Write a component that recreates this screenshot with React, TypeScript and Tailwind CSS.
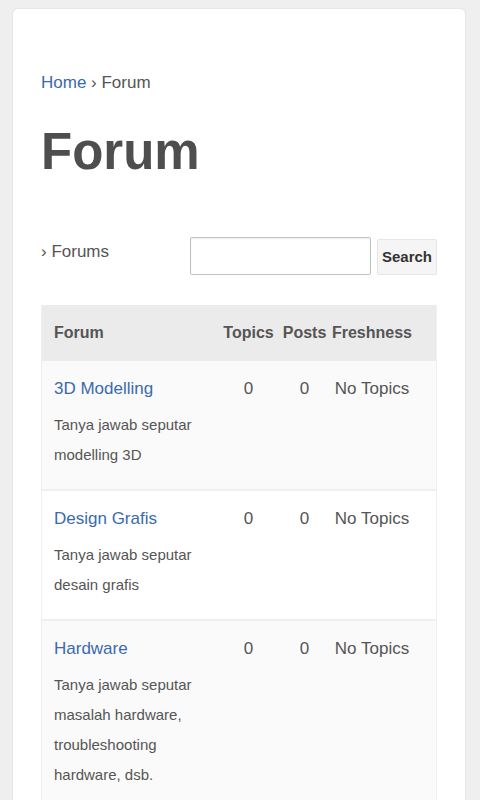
import React from "react";

const forums = [
  { name: "3D Modelling", desc: "Tanya jawab seputar modelling 3D" },
  { name: "Design Grafis", desc: "Tanya jawab seputar desain grafis" },
  {
    name: "Hardware",
    desc: "Tanya jawab seputar masalah hardware, troubleshooting hardware, dsb.",
  },
];

const cols = "grid grid-cols-[176px_61px_51px_84px_1fr]";

export default function App() {
  return (
    <div
      className="min-h-[800px] bg-[#efefef] pl-[13px] pr-[15px] pt-[9px]"
      style={{ fontFamily: '"Liberation Sans", Arial, sans-serif' }}
    >
      <div className="min-h-[791px] rounded-t-[5px] bg-white pl-[28px] pr-[28px] pt-[62px] shadow-[0_0_2px_rgba(0,0,0,0.12)]">
        {/* breadcrumb */}
        <div className="text-[17px] leading-[24px] text-[#555]">
          <a className="text-[#3a6aad]">Home</a> › Forum
        </div>

        <h1 className="mt-[28px] text-[51px] font-bold leading-[57px] text-[#4e4e4e]">
          Forum
        </h1>

        {/* sub-breadcrumb + search */}
        <div className="mt-[57px] flex items-start justify-between">
          <div className="mt-[3px] text-[17px] leading-[24px] text-[#555]">› Forums</div>
          <div className="flex items-end gap-[6px]">
            <input
              type="text"
              className="h-[38px] w-[181px] rounded-[2px] border border-[#c2c2c2] bg-white shadow-[inset_0_1px_2px_rgba(0,0,0,0.08)] outline-none"
            />
            <button className="h-[36px] w-[60px] rounded-[2px] border border-[#e6e6e6] bg-[#f5f5f5] text-[15px] font-bold text-[#333]">
              Search
            </button>
          </div>
        </div>

        {/* forum table */}
        <div className="mt-[30px] border-x border-[#f0f0f0]">
          <div className={`${cols} h-[56px] items-center bg-[#ebebeb] text-[16px] font-bold text-[#555]`}>
            <div className="pl-[12px]">Forum</div>
            <div className="text-center">Topics</div>
            <div className="text-center">Posts</div>
            <div className="text-center">Freshness</div>
            <div />
          </div>
          {forums.map((f, i) => (
            <div
              key={f.name}
              className={`${cols} ${i > 0 ? "border-t-2 border-[#efefef]" : ""} ${
                i % 2 === 0 ? "bg-[#fafafa]" : "bg-white"
              } pt-[16px] pb-[19px] text-[#555]`}
            >
              <div className="pl-[12px] pr-[4px]">
                <a className="block text-[17px] leading-[24px] text-[#3a6aad]">{f.name}</a>
                <p className="mt-[9px] text-[15px] leading-[30px]">{f.desc}</p>
              </div>
              <div className="text-center text-[17px] leading-[24px]">0</div>
              <div className="text-center text-[17px] leading-[24px]">0</div>
              <div className="text-center text-[17px] leading-[24px] whitespace-nowrap">No Topics</div>
              <div />
            </div>
          ))}
        </div>
      </div>
    </div>
  );
}
